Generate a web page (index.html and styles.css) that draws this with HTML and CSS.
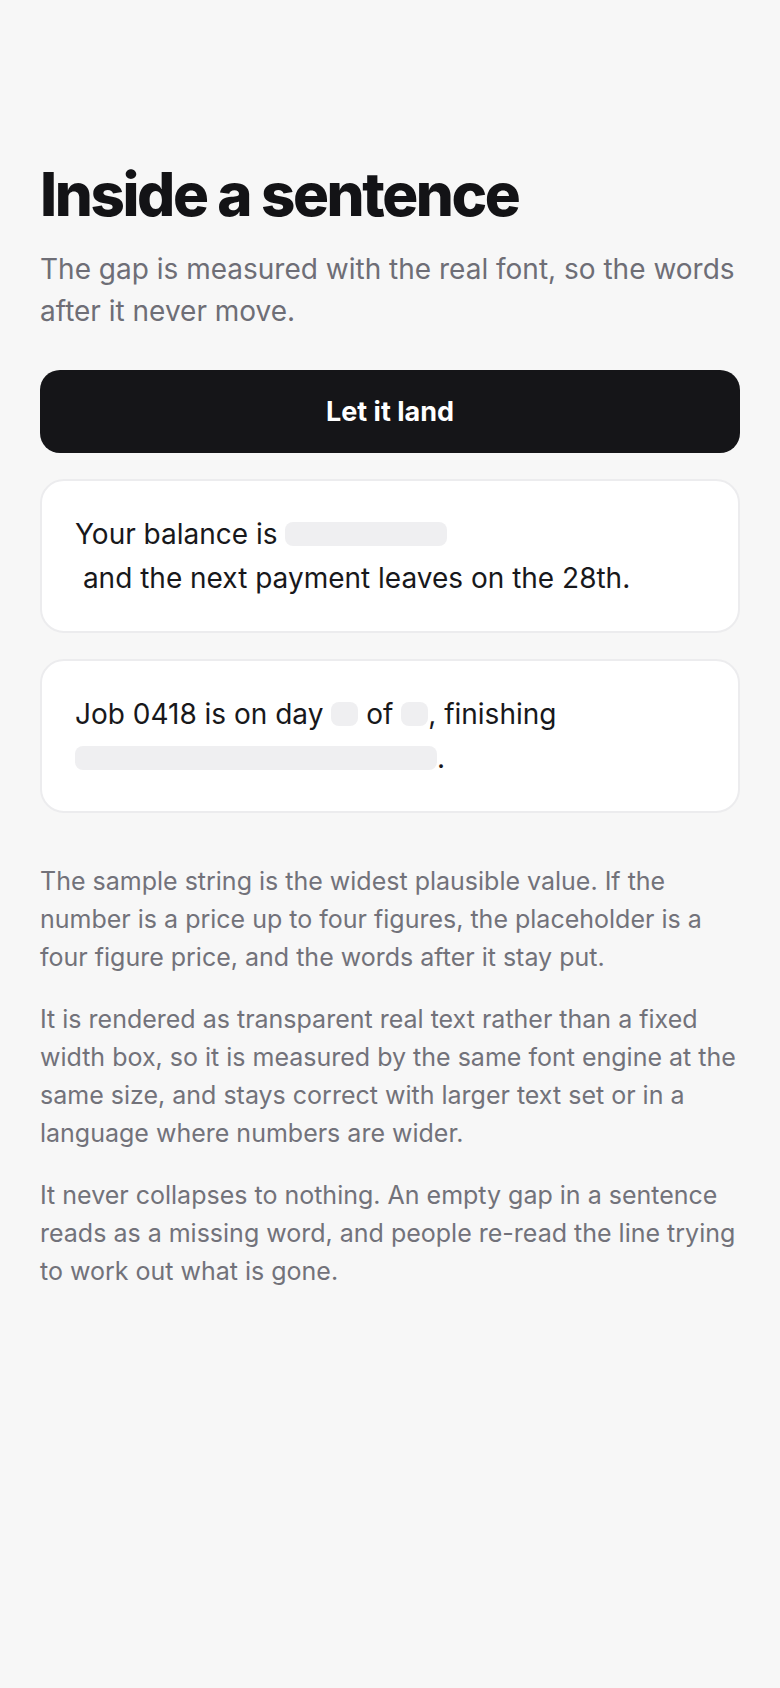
FILE: index.html
```html
<!DOCTYPE html>
<html lang="en">
<head>
  <meta charset="UTF-8">
  <meta name="viewport" content="width=device-width, initial-scale=1.0">
  <title>Inside a sentence</title>
  <link rel="stylesheet" href="styles.css">
</head>
<body>
  <main class="page">
    <h1>Inside a sentence</h1>
    <p class="lead">The gap is measured with the real font, so the words after it never move.</p>

    <button class="land">Let it land</button>

    <div class="card">
      <p class="sentence">Your balance is <span class="gap gap-money"></span> <span class="tail"> and the next payment leaves on the 28th.</span></p>
    </div>

    <div class="card">
      <p class="sentence">Job 0418 is on day <span class="gap gap-num"></span> of <span class="gap gap-num"></span>, finishing <span class="gap gap-date"></span>.</p>
    </div>

    <div class="notes">
      <p>The sample string is the widest plausible value. If the number is a price up to four figures, the placeholder is a four figure price, and the words after it stay put.</p>
      <p>It is rendered as transparent real text rather than a fixed width box, so it is measured by the same font engine at the same size, and stays correct with larger text set or in a language where numbers are wider.</p>
      <p>It never collapses to nothing. An empty gap in a sentence reads as a missing word, and people re-read the line trying to work out what is gone.</p>
    </div>
  </main>
</body>
</html>
```

FILE: styles.css
```css
body {
  margin: 0;
  font-family: Inter, "Noto Sans", sans-serif;
  background-color: #f7f7f7;
  color: #18181b;
}
.page {
  padding: 161px 40px 80px;
}
h1 {
  margin: 0;
  font-size: 60px;
  font-weight: 800;
  line-height: 66px;
  letter-spacing: -0.04em;
  color: #131316;
}
.lead {
  margin: 21px 0 0;
  font-size: 28px;
  line-height: 42px;
  color: #6e6e76;
}
.land {
  display: block;
  width: 100%;
  height: 83px;
  margin-top: 38px;
  border: none;
  border-radius: 20px;
  background-color: #151518;
  color: #fff;
  font-family: inherit;
  font-size: 27px;
  font-weight: 700;
  cursor: pointer;
}
.card {
  margin-top: 26px;
  background-color: #fff;
  border: 2px solid #ececee;
  border-radius: 24px;
  padding: 31px 33px;
}
.sentence {
  margin: 0;
  font-size: 28px;
  line-height: 44px;
}
.gap {
  display: inline-block;
  height: 24px;
  border-radius: 8px;
  background-color: #efeff1;
  vertical-align: -2px;
}
.gap-money {
  width: 162px;
}
.gap-num {
  width: 27px;
}
.gap-date {
  width: 362px;
}
.tail {
  display: inline-block;
  white-space: pre;
}
.notes {
  margin-top: 49px;
}
.notes p {
  margin: 0 0 24px;
  font-size: 25px;
  line-height: 38px;
  color: #72727a;
}
```
